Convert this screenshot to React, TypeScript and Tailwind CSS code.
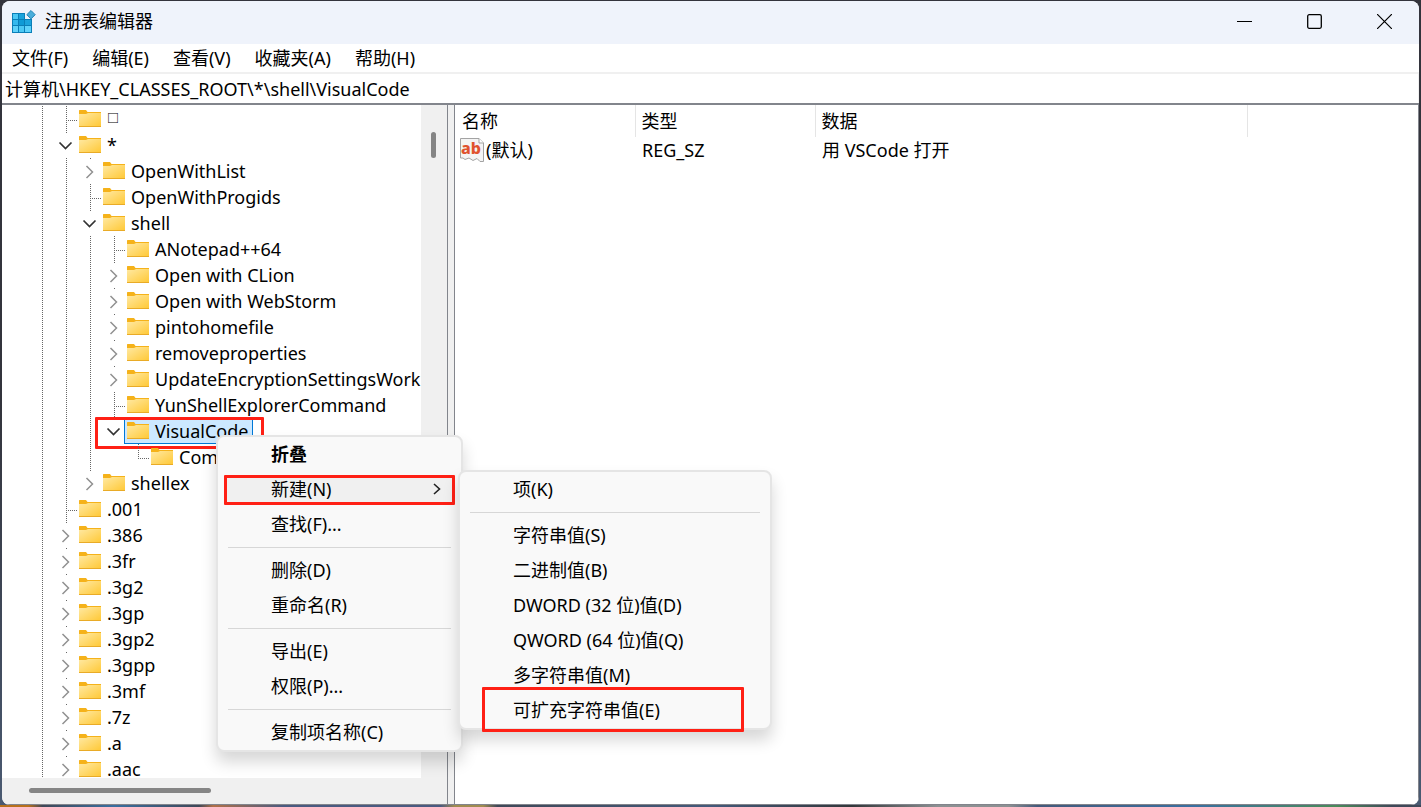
import React from "react";

interface TreeNode {
  name: string;
  level: number;
  state?: "open" | "closed";
  // one flag per ancestor column, true where its line runs through the row
  rails: boolean[];
  last?: boolean;
  selected?: boolean;
}

const TREE: TreeNode[] = [
  { name: "□", level: 0, rails: [true] },
  { name: "*", level: 0, state: "open", rails: [true] },
  { name: "OpenWithList", level: 1, state: "closed", rails: [true, true] },
  { name: "OpenWithProgids", level: 1, rails: [true, true] },
  { name: "shell", level: 1, state: "open", rails: [true, true] },
  { name: "ANotepad++64", level: 2, rails: [true, true, true] },
  { name: "Open with CLion", level: 2, state: "closed", rails: [true, true, true] },
  { name: "Open with WebStorm", level: 2, state: "closed", rails: [true, true, true] },
  { name: "pintohomefile", level: 2, state: "closed", rails: [true, true, true] },
  { name: "removeproperties", level: 2, state: "closed", rails: [true, true, true] },
  { name: "UpdateEncryptionSettingsWork", level: 2, state: "closed", rails: [true, true, true] },
  { name: "YunShellExplorerCommand", level: 2, rails: [true, true, true] },
  { name: "VisualCode", level: 2, state: "open", rails: [true, true, true], selected: true },
  { name: "Command", level: 3, rails: [true, true, true, false], last: true },
  { name: "shellex", level: 1, state: "closed", rails: [true, true] },
  { name: ".001", level: 0, rails: [true] },
  { name: ".386", level: 0, state: "closed", rails: [true] },
  { name: ".3fr", level: 0, state: "closed", rails: [true] },
  { name: ".3g2", level: 0, state: "closed", rails: [true] },
  { name: ".3gp", level: 0, state: "closed", rails: [true] },
  { name: ".3gp2", level: 0, state: "closed", rails: [true] },
  { name: ".3gpp", level: 0, state: "closed", rails: [true] },
  { name: ".3mf", level: 0, state: "closed", rails: [true] },
  { name: ".7z", level: 0, state: "closed", rails: [true] },
  { name: ".a", level: 0, state: "closed", rails: [true] },
  { name: ".aac", level: 0, state: "closed", rails: [true] },
];

const MENU_BAR = ["文件(F)", "编辑(E)", "查看(V)", "收藏夹(A)", "帮助(H)"];

const CONTEXT_GROUPS = [
  ["折叠", "新建(N)", "查找(F)..."],
  ["删除(D)", "重命名(R)"],
  ["导出(E)", "权限(P)..."],
  ["复制项名称(C)"],
];

const NEW_GROUPS = [
  ["项(K)"],
  ["字符串值(S)", "二进制值(B)", "DWORD (32 位)值(D)", "QWORD (64 位)值(Q)", "多字符串值(M)", "可扩充字符串值(E)"],
];

function RegeditIcon() {
  return (
    <svg className="w-6 h-6 shrink-0" viewBox="0 0 24 24">
      <rect x="0" y="3" width="20" height="20" fill="#0b7fb8" />
      <rect x="1" y="4" width="5" height="5" fill="#4cc8f4" />
      <rect x="7" y="4" width="5" height="5" fill="#1ba3dc" />
      <rect x="1" y="10" width="5" height="5" fill="#35b9ee" />
      <rect x="7" y="10" width="5" height="5" fill="#0f9ad6" />
      <rect x="13" y="10" width="6" height="5" fill="#1ba3dc" />
      <rect x="1" y="16" width="5" height="6" fill="#5fd2fa" />
      <rect x="7" y="16" width="5" height="6" fill="#4cc8f4" />
      <rect x="13" y="16" width="6" height="6" fill="#5fd2fa" />
      <rect x="13" y="2" width="7" height="7" fill="#f0f3fa" />
      <path d="M19 0.5 23.2 4.7 19 8.9 14.8 4.7Z" fill="#49aedb" stroke="#2383b4" strokeWidth="1" />
    </svg>
  );
}

function FolderIcon() {
  return (
    <svg className="w-[22px] h-[18px] shrink-0" viewBox="0 0 22 18">
      <defs>
        <linearGradient id="folder" x1="0" y1="0" x2="1" y2="1">
          <stop offset="0" stopColor="#ffe9a3" />
          <stop offset="1" stopColor="#ffc938" />
        </linearGradient>
      </defs>
      <path d="M0 .6Q0 0 .6 0H7L8.500 2H22V6H0Z" fill="#f5b21a" />
      <path d="M0 4H7L9 3H22V16H0Z" fill="url(#folder)" />
      <path d="M0 16.500H22" stroke="#e9ab27" />
    </svg>
  );
}

function StringIcon() {
  return (
    <svg className="w-6 h-6 shrink-0" viewBox="0 0 24 24">
      <path
        d="M.5.5H19L23.500 5V23.500H20L17 20.500 13 22.500 9 20 5 21.500 3 20H.5Z"
        fill="#f4f4f4"
        stroke="#a3a3a3"
      />
      <path d="M19 .5V5H23.500" fill="#fff" stroke="#a3a3a3" />
      <text x="11" y="16" textAnchor="middle" fontSize="16" fontWeight="800" fontFamily="Noto Sans" fill="#e0532f">
        ab
      </text>
    </svg>
  );
}

function Rail({ on }: { on: boolean }) {
  return (
    <svg className="w-6 h-[26px] shrink-0" viewBox="0 0 24 26" stroke="#666">
      {on && <path d="M12.500 0V26" strokeDasharray="1 1" />}
    </svg>
  );
}

function Expander({ node }: { node: TreeNode }) {
  return (
    <svg className="w-6 h-[26px] shrink-0" viewBox="0 0 24 26" fill="none">
      {!node.state && (
        <g stroke="#666" strokeDasharray="1 1">
          <path d={node.last ? "M12.500 0V14" : "M12.500 0V26"} />
          <path d="M12 14.500H24" />
        </g>
      )}
      {node.state && <path d="M12.500 0V1" stroke="#666" />}
      {node.state === "closed" && <path d="M8.500 8 14.500 14 8.500 20" stroke="#919191" strokeWidth="1.500" />}
      {node.state === "open" && <path d="M5.500 10.500 11.500 16.500 17.500 10.500" stroke="#333" strokeWidth="1.700" />}
    </svg>
  );
}

function TreeRow({ node }: { node: TreeNode }) {
  const rails = node.rails.slice(0, node.level + 1);
  return (
    <li className="relative flex h-[26px] shrink-0 items-center">
      {rails.map((on, i) => (
        <Rail key={i} on={on} />
      ))}
      <Expander node={node} />
      <button
        className={`-ml-0.5 flex h-full items-center gap-1.5 whitespace-nowrap border pl-0.5 pr-1 ${
          node.selected ? "border-[#0078d7] bg-[#cce8ff]" : "border-transparent"
        }`}
      >
        <FolderIcon />
        {node.name === "□" ? <span className="text-[12px] font-semibold">□</span> : node.name}
      </button>
      {node.selected && (
        <span className="absolute -top-px left-[65px] h-8 w-[169px] rounded-[1px] border-3 border-[#ff2015]" />
      )}
    </li>
  );
}

function Menu({
  groups,
  bold,
  active,
  marked,
  className,
}: {
  groups: string[][];
  bold?: string;
  active?: string;
  marked?: string;
  className: string;
}) {
  return (
    <div
      role="menu"
      className={`absolute rounded-lg border-2 border-[#e5e5e5] bg-[#f9f9f9] shadow-[0_10px_16px_rgba(0,0,0,0.16)] ${className}`}
    >
      {groups.map((items, i) => (
        <div key={i}>
          {i > 0 && <div className="mx-2.5 my-[5px] h-px bg-[#d7d7d7]" />}
          {items.map((item) => (
            <button
              key={item}
              role="menuitem"
              className={`relative flex h-[35px] w-full items-center pb-0.5 pl-[53px] text-left ${item === bold ? "font-bold" : ""}`}
            >
              {item === active && (
                <span className="absolute inset-x-[6px] top-[3px] h-[30px] rounded-[1px] border-3 border-[#ff2015] bg-[#f0f0f0]" />
              )}
              <span className="relative">{item}</span>
              {item === active && (
                <svg className="absolute right-5 w-2 h-3" viewBox="0 0 8 12" fill="none" stroke="#222" strokeWidth="1.600">
                  <path d="M1 1 6.500 6 1 11" />
                </svg>
              )}
              {item === marked && (
                <span className="absolute -top-1.5 left-[22px] h-[45px] w-[262px] rounded-[1px] border-3 border-[#ff2015]" />
              )}
            </button>
          ))}
        </div>
      ))}
    </div>
  );
}

export default function App() {
  return (
    <div className="relative flex h-screen flex-col overflow-hidden bg-linear-to-b from-[#33343c] from-50% to-[#4a5a72] pt-px font-['Noto_Sans','Noto_Sans_CJK_SC',sans-serif] text-[18px] leading-6 text-black">
      <div className="mx-0.5 flex min-h-0 flex-1 flex-col overflow-hidden rounded-lg bg-white">
        {/* Title bar */}
        <header className="flex h-[43px] shrink-0 items-center bg-[#eff3fb] pb-0.5 pl-2.5">
          <RegeditIcon />
          <h1 className="ml-[9px] flex-1 pb-0.5">注册表编辑器</h1>
          <button aria-label="最小化" className="flex h-full w-[70px] items-center justify-center">
            <svg width="15" height="15" stroke="#000">
              <path d="M0 7.500H15" />
            </svg>
          </button>
          <button aria-label="最大化" className="flex h-full w-[70px] items-center justify-center">
            <svg width="15" height="15" fill="none" stroke="#000" strokeWidth="1.300">
              <rect x="0.700" y="0.700" width="13.600" height="13.600" rx="1.500" />
            </svg>
          </button>
          <button aria-label="关闭" className="flex h-full w-[70px] items-center justify-center">
            <svg width="15" height="15" stroke="#000" strokeWidth="1.200">
              <path d="M0 0 15 15M15 0 0 15" />
            </svg>
          </button>
        </header>

        <nav className="flex h-7 shrink-0 items-center gap-6 pl-2.5">
          {MENU_BAR.map((m) => (
            <button key={m}>{m}</button>
          ))}
        </nav>

        <input
          aria-label="地址"
          defaultValue="计算机\HKEY_CLASSES_ROOT\*\shell\VisualCode"
          className="h-[31px] shrink-0 border-t-2 border-r border-[#f0f0f0] bg-white pb-0.5 pl-[3px] outline-none"
        />

        <main className="flex min-h-0 flex-1 border-t-2 border-r border-b border-[#82858c]">
          {/* Key tree */}
          <section className="flex w-[446px] shrink-0 flex-col border-r border-[#82858c] bg-[#f0f0f0]">
            <div className="flex min-h-0 flex-1">
              <ul className="flex min-w-0 flex-1 flex-col overflow-hidden bg-white pt-px pl-7">
                {TREE.map((node) => (
                  <TreeRow key={node.name} node={node} />
                ))}
              </ul>
              <div className="w-[26px] shrink-0 pt-[27px] pl-2.5">
                <div className="h-[26px] w-[5px] rounded-full bg-[#858585]" />
              </div>
            </div>
            <div className="flex h-[26px] shrink-0 items-center pb-0.5 pl-[27px]">
              <div className="h-[5px] w-[182px] rounded-full bg-[#858585]" />
            </div>
          </section>

          <div className="w-1.5 shrink-0 bg-[#f0f0f0]" />

          {/* Values */}
          <section className="min-w-0 flex-1 border-l border-[#82858c]">
            <table className="table-fixed text-left">
              <thead>
                <tr className="h-8">
                  <th className="w-[180px] border-r border-[#e5e5e5] pl-[7px] font-normal">名称</th>
                  <th className="w-[180px] border-r border-[#e5e5e5] pl-1.5 font-normal">类型</th>
                  <th className="w-[432px] border-r border-[#e5e5e5] pl-1.5 font-normal">数据</th>
                </tr>
              </thead>
              <tbody>
                <tr className="h-[26px]">
                  <td className="pl-[5px]">
                    <div className="flex items-center gap-0.5">
                      <StringIcon />
                      (默认)
                    </div>
                  </td>
                  <td className="pl-[7px]">REG_SZ</td>
                  <td className="pl-[7px]">用 VSCode 打开</td>
                </tr>
              </tbody>
            </table>
          </section>
        </main>
      </div>

      {/* Sliver of desktop below the window */}
      <div className="h-0.5 shrink-0 bg-[linear-gradient(to_right,#b8701c_0%,#b8701c_2%,#3f4858_3%,#3a6fa0_8%,#3f4858_14%,#b07048_15%,#4a5a80_20%,#4a5a80_31%,#a08c50_32%,#a08c50_34%,#3f4858_35%,#44597a_50%,#33373a_60%,#8c9092_66%,#8c9092_71%,#44597a_73%,#3a6fa0_84%,#4a8a5a_94%,#3f4858_98%)]" />

      <Menu groups={CONTEXT_GROUPS} bold="折叠" active="新建(N)" className="top-[435px] left-[216px] w-[247px]" />
      <Menu groups={NEW_GROUPS} marked="可扩充字符串值(E)" className="top-[470px] left-[458px] w-[314px]" />
    </div>
  );
}
